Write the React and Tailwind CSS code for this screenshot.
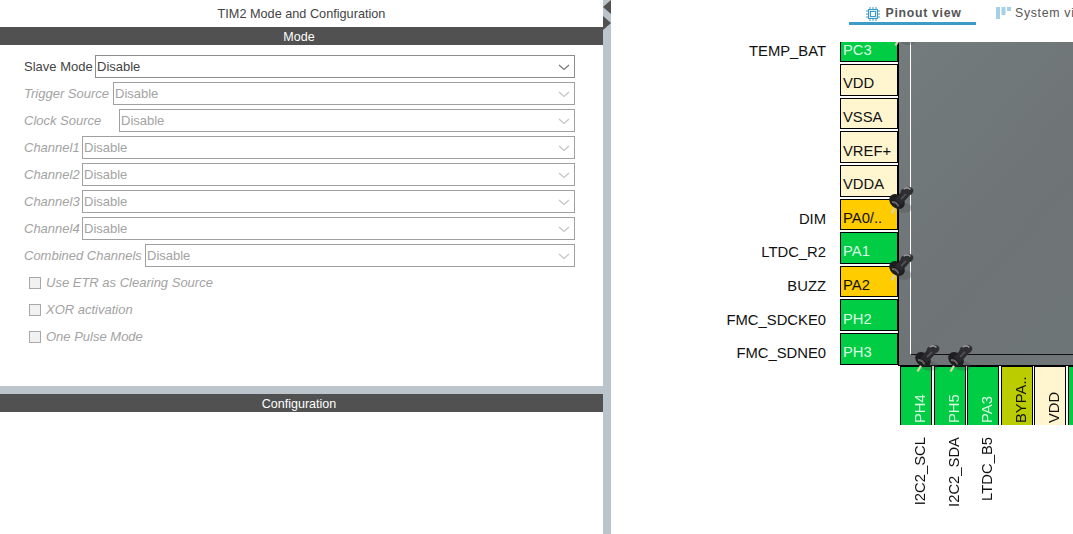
import React from "react";

const FONT = { fontFamily: '"Liberation Sans", Arial, sans-serif' };

const modeRows = [
  { label: "Slave Mode", on: true, w: "w-[71px]" },
  { label: "Trigger Source", w: "w-[89px]" },
  { label: "Clock Source", w: "w-[95px]" },
  { label: "Channel1", w: "w-[58px]" },
  { label: "Channel2", w: "w-[58px]" },
  { label: "Channel3", w: "w-[58px]" },
  { label: "Channel4", w: "w-[58px]" },
  { label: "Combined Channels", w: "w-[121px]" },
];

const leftPins = [
  { n: "PC3", l: "TEMP_BAT", k: "g" },
  { n: "VDD", k: "y" },
  { n: "VSSA", k: "y" },
  { n: "VREF+", k: "y" },
  { n: "VDDA", k: "y" },
  { n: "PA0/..", l: "DIM", k: "o" },
  { n: "PA1", l: "LTDC_R2", k: "g" },
  { n: "PA2", l: "BUZZ", k: "o" },
  { n: "PH2", l: "FMC_SDCKE0", k: "g" },
  { n: "PH3", l: "FMC_SDNE0", k: "g" },
];

const bottomPins = [
  { n: "PH4", l: "I2C2_SCL", k: "g" },
  { n: "PH5", l: "I2C2_SDA", k: "g" },
  { n: "PA3", l: "LTDC_B5", k: "g" },
  { n: "BYPA..", k: "l" },
  { n: "VDD", k: "y" },
  { n: "", k: "g" },
];

const pinColor = {
  g: "bg-[#00cc44] text-[#dcfbe4]",
  y: "bg-[#fff5cf] text-[#111111]",
  o: "bg-[#ffcc00] text-[#111111]",
  l: "bg-[#bbcc00] text-[#111111]",
};

const VERTICAL = { writingMode: "vertical-rl", transform: "rotate(180deg)" };

function Chevron({ stroke }) {
  return (
    <svg width="12" height="7" viewBox="0 0 12 7" className="shrink-0">
      <path d="M1 1l5 4.500L11 1" fill="none" stroke={stroke} strokeWidth="1.2" />
    </svg>
  );
}

function Pushpin({ className }) {
  return (
    <svg width="30" height="30" viewBox="0 0 30 30" className={`absolute blur-[0.4px] ${className}`}>
      <ellipse cx="17" cy="23" rx="8" ry="5" fill="#4a4c4d" opacity="0.3" />
      <path d="M9 21L4.500 28.500" stroke="#d8d2a8" strokeWidth="2.400" />
      <ellipse cx="10" cy="16.500" rx="8.500" ry="6.500" transform="rotate(40 10 16.500)" fill="#1e1e20" />
      <path d="M11 17L19 8" stroke="#2a2a2c" strokeWidth="8.500" />
      <ellipse cx="20" cy="6.500" rx="6.500" ry="4.500" transform="rotate(-15 20 6.500)" fill="#2f2f31" />
      <path d="M16.500 4c2.500-1.400 5.500-1.200 7 0.500" stroke="#95959a" strokeWidth="1.500" fill="none" />
      <path d="M5 17c3 0 5.500 1.500 6.500 4.500" stroke="#646466" strokeWidth="1.800" fill="none" />
      <path d="M14 14l5-5" stroke="#505054" strokeWidth="1.800" />
    </svg>
  );
}

function ChipIcon() {
  return (
    <svg width="14" height="14" viewBox="0 0 14 14" className="shrink-0">
      <rect x="2.500" y="2.500" width="9" height="9" fill="#d5ebf5" stroke="#3d9cc6" />
      <rect x="4.500" y="4.500" width="5" height="5" fill="#fff" stroke="#3d9cc6" />
      <path d="M4 0v2M7 0v2M10 0v2M4 12v2M7 12v2M10 12v2M0 4h2M0 7h2M0 10h2M12 4h2M12 7h2M12 10h2" stroke="#3d9cc6" />
    </svg>
  );
}

function SystemIcon() {
  return (
    <svg width="15" height="13" viewBox="0 0 15 13" className="shrink-0">
      <path d="M0 1h4M0 3h4M0 5h4M0 7h4M0 9h4M0 11h4M5.500 1h4M5.500 3h4M5.500 5h4M5.500 7h4M11 1h4M11 3h4" stroke="#4aa3cc" />
    </svg>
  );
}

function SelectRow({ label, on, w }) {
  return (
    <div className="flex h-[23px] items-center">
      <span
        className={`${w} shrink-0 whitespace-nowrap pt-[1px] text-[13px] ${on ? "text-[#444444]" : "italic text-[#a3a3a3]"}`}
      >
        {label}
      </span>
      <div
        className={`flex h-[23px] flex-1 items-center justify-between border pl-[1px] pr-[4px] pt-[1px] text-[13px] ${on ? "border-[#8c8c8c] text-[#444444]" : "border-[#a0a0a0] text-[#a3a3a3]"}`}
      >
        <span>Disable</span>
        <Chevron stroke={on ? "#777777" : "#c4c4c4"} />
      </div>
    </div>
  );
}

function CheckRow({ label }) {
  return (
    <div className="flex h-[23px] items-center gap-[5px] pl-[5px]">
      <span className="h-[12px] w-[12px] border border-[#a8a8a8] bg-[#f1f1f1]" />
      <span className="pt-[1px] text-[13px] italic text-[#a3a3a3]">{label}</span>
    </div>
  );
}

function SectionBar({ children }) {
  return (
    <div className="flex h-[18px] shrink-0 items-center justify-center bg-[#505150] pr-[5px] pt-[3px] text-[12.500px] text-white">
      {children}
    </div>
  );
}

export default function App() {
  return (
    <div className="flex h-[534px] w-[1073px] overflow-hidden bg-white" style={FONT}>
      <div className="flex w-[603px] shrink-0 flex-col">
        <div className="flex h-[27px] shrink-0 items-center justify-center pt-[3px] text-[12.700px] text-[#444444]">
          TIM2 Mode and Configuration
        </div>
        <SectionBar>Mode</SectionBar>
        <div className="flex h-[341px] shrink-0 flex-col gap-[4px] pl-[24px] pr-[28px] pt-[10px]">
          {modeRows.map((r) => (
            <SelectRow key={r.label} {...r} />
          ))}
          {["Use ETR as Clearing Source", "XOR activation", "One Pulse Mode"].map((c) => (
            <CheckRow key={c} label={c} />
          ))}
        </div>
        <div className="h-[8px] shrink-0 bg-[#bcc5cb]" />
        <SectionBar>Configuration</SectionBar>
      </div>

      <div className="relative w-[8px] shrink-0 bg-[#bac5cb]">
        <span className="absolute left-0 top-0 h-0 w-0 border-y-[7px] border-r-[8px] border-y-transparent border-r-[#505150]" />
        <span className="absolute left-0 top-[16px] h-0 w-0 border-y-[7px] border-l-[8px] border-y-transparent border-l-[#505150]" />
      </div>

      <div className="relative flex-1 overflow-hidden">
        <div className="flex h-[25px] items-start pl-[238px] text-[12.300px] tracking-[0.7px] text-[#555555]">
          <div className="flex h-[25px] w-[127px] shrink-0 items-center justify-center gap-[5px] border-b-[3px] border-[#3d9cc6] pl-[3px] pt-[5px] font-bold">
            <ChipIcon />
            Pinout view
          </div>
          <div className="ml-[20px] flex h-[25px] shrink-0 items-center gap-[4px] whitespace-nowrap pt-[2px]">
            <SystemIcon />
            System view
          </div>
        </div>

        <div className="absolute left-[287px] top-[42px] h-[324px] w-[300px] border-b border-l border-black bg-gradient-to-br from-[#747b7c] via-[#6e7476] to-[#707778]">
          <div className="ml-[11px] h-[313px] border-b border-l border-b-[#111111] border-l-white" />
        </div>

        <div className="absolute left-0 top-[42px] h-[324px] w-[287px] overflow-hidden">
          <div className="-mt-[11.650px] flex flex-col">
            {leftPins.map((p) => (
              <div key={p.n} className="flex h-[33.650px] items-stretch justify-end">
                <span className="flex items-center pr-[14px] pt-[7px] text-[14.800px] text-[#111111]">{p.l}</span>
                <div className={`mb-[2px] flex w-[58px] items-center border border-black pl-[2px] pt-[7px] text-[14.800px] ${pinColor[p.k]}`}>
                  {p.n}
                </div>
              </div>
            ))}
          </div>
        </div>

        <div className="absolute left-[289px] top-[366px] flex gap-[1.600px]">
          {bottomPins.map((p, i) => (
            <div key={i} className="flex w-[32px] flex-col items-center">
              <div className={`flex h-[59px] w-full items-center border border-t-0 border-black pr-[9px] pt-[2px] text-[14.800px] ${pinColor[p.k]}`} style={VERTICAL}>
                {p.n}
              </div>
              {p.l && (
                <span className="ml-[8px] mt-[12px] whitespace-nowrap text-[14.800px] text-[#111111]" style={VERTICAL}>
                  {p.l}
                </span>
              )}
            </div>
          ))}
        </div>

        <div className="absolute left-[280px] top-[42px] h-[6px] w-[30px] overflow-hidden">
          <Pushpin className="left-0 top-[-25px]" />
        </div>
        <Pushpin className="left-[276px] top-[185px]" />
        <Pushpin className="left-[276px] top-[252px]" />
        <Pushpin className="left-[302px] top-[343px]" />
        <Pushpin className="left-[335px] top-[343px]" />
      </div>
    </div>
  );
}
